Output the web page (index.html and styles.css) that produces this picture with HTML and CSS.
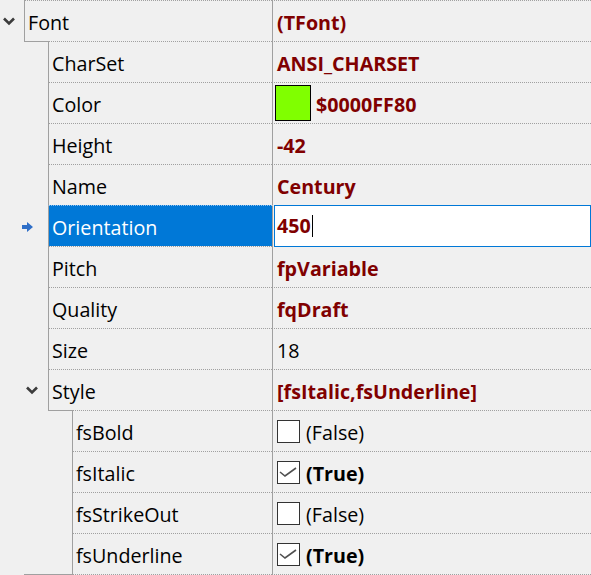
FILE: index.html
```html
<!DOCTYPE html>
<html>
<head>
<meta charset="utf-8">
<link rel="stylesheet" href="styles.css">
</head>
<body>
<div class="grid">
  <div class="row">
    <div class="gutter"><span class="ind"><svg class="chev" width="24" height="40" viewBox="0 0 24 40"><path d="M4 18.5 L9 23.5 L14 18.5" /></svg></span></div>
    <div class="name w0">Font</div>
    <div class="value mod">(TFont)</div>
  </div>
  <div class="row">
    <div class="gutter"><span class="ind"></span><span class="ind cap-top"></span></div>
    <div class="name w1">CharSet</div>
    <div class="value mod">ANSI_CHARSET</div>
  </div>
  <div class="row">
    <div class="gutter"><span class="ind"></span><span class="ind"></span></div>
    <div class="name w1">Color</div>
    <div class="value mod"><span class="swatch"></span>$0000FF80</div>
  </div>
  <div class="row">
    <div class="gutter"><span class="ind"></span><span class="ind"></span></div>
    <div class="name w1">Height</div>
    <div class="value mod">-42</div>
  </div>
  <div class="row">
    <div class="gutter"><span class="ind"></span><span class="ind"></span></div>
    <div class="name w1">Name</div>
    <div class="value mod">Century</div>
  </div>
  <div class="row">
    <div class="gutter"><svg class="arrow" width="48" height="40" viewBox="0 0 48 40"><polygon points="22,19 27,19 27,16 33,21 27,26 27,23 22,23" /></svg></div>
    <div class="name w1 selected">Orientation</div>
    <div class="value edit-cell"><div class="editor"><span class="mod">450</span><span class="caret"></span></div></div>
  </div>
  <div class="row">
    <div class="gutter"><span class="ind"></span><span class="ind"></span></div>
    <div class="name w1">Pitch</div>
    <div class="value mod">fpVariable</div>
  </div>
  <div class="row">
    <div class="gutter"><span class="ind"></span><span class="ind"></span></div>
    <div class="name w1">Quality</div>
    <div class="value mod">fqDraft</div>
  </div>
  <div class="row">
    <div class="gutter"><span class="ind"></span><span class="ind"></span></div>
    <div class="name w1">Size</div>
    <div class="value">18</div>
  </div>
  <div class="row">
    <div class="gutter"><span class="ind"></span><span class="ind"><svg class="chev" width="24" height="40" viewBox="0 0 24 40"><path d="M3 18.5 L8 23.5 L13 18.5" /></svg></span></div>
    <div class="name w1">Style</div>
    <div class="value mod">[fsItalic,fsUnderline]</div>
  </div>
  <div class="row">
    <div class="gutter"><span class="ind"></span><span class="ind"></span><span class="ind cap-top"></span></div>
    <div class="name w2">fsBold</div>
    <div class="value"><span class="check"></span>(False)</div>
  </div>
  <div class="row">
    <div class="gutter"><span class="ind"></span><span class="ind"></span><span class="ind"></span></div>
    <div class="name w2">fsItalic</div>
    <div class="value strong"><span class="check"><svg width="21" height="21" viewBox="0 0 21 21"><path d="M2 10 L7 14 L18 6" /></svg></span>(True)</div>
  </div>
  <div class="row">
    <div class="gutter"><span class="ind"></span><span class="ind"></span><span class="ind"></span></div>
    <div class="name w2">fsStrikeOut</div>
    <div class="value"><span class="check"></span>(False)</div>
  </div>
  <div class="row last">
    <div class="gutter"><span class="ind"></span><span class="ind cap-bottom"></span><span class="ind cap-bottom"></span></div>
    <div class="name w2">fsUnderline</div>
    <div class="value strong"><span class="check"><svg width="21" height="21" viewBox="0 0 21 21"><path d="M2 10 L7 14 L18 6" /></svg></span>(True)</div>
  </div>
</div>
</body>
</html>
```

FILE: styles.css
```css
html, body {
  margin: 0;
  padding: 0;
  background: #f0f0f0;
}
.grid {
  width: 591px;
  font-family: "Open Sans", "Noto Sans", sans-serif;
  font-size: 19.7px;
  color: #000;
  background: #f0f0f0;
}
.row {
  display: flex;
  height: 41px;
  box-sizing: border-box;
}
.row.last {
  height: 42px;
}
.gutter {
  display: flex;
  flex: none;
  height: 41px;
}
.ind {
  width: 24px;
  height: 41px;
  box-sizing: border-box;
  flex: none;
  display: block;
}
.cap-top {
  border-top: 1px solid #a0a0a0;
}
.row.last .gutter {
  height: 42px;
}
.row.last .ind {
  height: 42px;
}
.cap-bottom {
  border-bottom: 1px solid #a0a0a0;
}
.chev {
  display: block;
}
.chev path {
  fill: none;
  stroke: #3c3c3c;
  stroke-width: 2.6;
}
.arrow {
  display: block;
  margin-top: 1px;
}
.arrow polygon {
  fill: #2f6fc8;
}
.name, .value {
  box-sizing: border-box;
  border-top: 1px dotted #a0a0a0;
  border-left: 1px solid #a0a0a0;
  line-height: 36px;
  padding-top: 4px;
  white-space: nowrap;
  display: flex;
  align-items: center;
}
.row.last .name, .row.last .value {
  border-bottom: 1px dotted #a0a0a0;
}
.name {
  flex: none;
  padding-left: 3px;
}
.w0 { width: 248px; }
.w1 { width: 224px; }
.w2 { width: 200px; }
.value {
  flex: 1;
  padding-left: 4px;
}
.mod {
  color: #800000;
  font-weight: bold;
}
.strong {
  font-weight: bold;
}
.selected {
  background: #0078d7;
  color: #fff;
  border-top-color: #8fc0ee;
}
.swatch {
  width: 36px;
  height: 36px;
  box-sizing: border-box;
  border: 1px solid #000;
  background: #80ff00;
  margin-left: -2px;
  margin-right: 5px;
  margin-top: -4px;
  flex: none;
}
.edit-cell {
  padding-left: 1px;
  padding-top: 0;
  border-top-color: transparent;
  align-items: stretch;
}
.editor {
  flex: 1;
  box-sizing: border-box;
  margin-top: -1px;
  height: 42px;
  border: 1px solid #0078d7;
  background: #fff;
  padding-left: 2px;
  padding-top: 0;
  display: flex;
  align-items: center;
  position: relative;
  z-index: 1;
}
.caret {
  width: 1px;
  height: 22px;
  background: #000;
  margin-left: 1px;
}
.check {
  width: 23px;
  height: 23px;
  box-sizing: border-box;
  border: 1px solid #333;
  background: #fff;
  margin-right: 6px;
  margin-top: -3px;
  flex: none;
  display: flex;
  align-items: center;
  justify-content: center;
}
.check svg {
  display: block;
}
.check path {
  fill: none;
  stroke: #505050;
  stroke-width: 1.6;
}
```
